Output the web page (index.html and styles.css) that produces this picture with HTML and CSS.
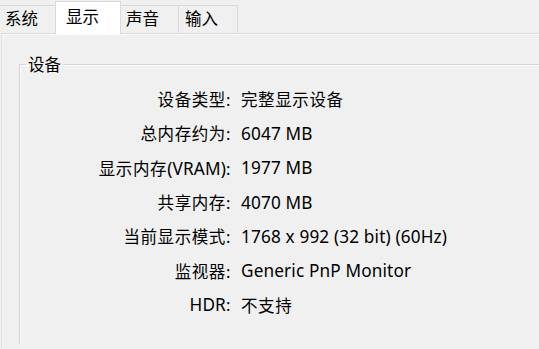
FILE: index.html
```html
<!DOCTYPE html>
<html lang="zh-CN">
<head>
<meta charset="utf-8">
<title>显示</title>
<link rel="stylesheet" href="styles.css">
</head>
<body>
<div class="tabs">
  <div class="tab first">系统</div>
  <div class="tab active">显示</div>
  <div class="tab">声音</div>
  <div class="tab">输入</div>
</div>
<div class="pane">
  <fieldset class="group">
    <legend class="legend">设备</legend>
    <div class="rows">
      <div class="label">设备类型:</div><div class="value">完整显示设备</div>
      <div class="label">总内存约为:</div><div class="value"><span class="lat">6047 MB</span></div>
      <div class="label">显示内存<span class="lat">(VRAM)</span>:</div><div class="value"><span class="lat">1977 MB</span></div>
      <div class="label">共享内存:</div><div class="value"><span class="lat">4070 MB</span></div>
      <div class="label">当前显示模式:</div><div class="value"><span class="lat">1768 x 992 (32 bit) (60Hz)</span></div>
      <div class="label">监视器:</div><div class="value"><span class="lat">Generic PnP Monitor</span></div>
      <div class="label"><span class="lat">HDR</span>:</div><div class="value">不支持</div>
    </div>
  </fieldset>
</div>
</body>
</html>
```
FILE: styles.css
```css
html, body {
  margin: 0;
  padding: 0;
  background: #f0f0f0;
  color: #000;
  font-family: "Noto Sans", "Noto Sans CJK SC", sans-serif;
  font-size: 16px;
  overflow: hidden;
  height: 349px;
}

.tabs {
  display: flex;
  align-items: flex-end;
  height: 33px;
  font-size: 16.5px;
}

.tab {
  box-sizing: border-box;
  width: 60px;
  height: 28px;
  line-height: 26px;
  padding-left: 6px;
  border: 1px solid #dadada;
  border-bottom: none;
  margin-right: -1px;
  background: #f0f0f0;
}

.tab.first {
  width: 58px;
  padding-left: 5px;
  border-left: none;
}

.tab.active {
  position: relative;
  z-index: 1;
  width: 66px;
  height: 33px;
  line-height: 30px;
  padding-left: 10px;
  margin: 0 -2px -1px -2px;
  background: #fff;
  border-color: #dadada;
}

.pane {
  box-sizing: border-box;
  margin-left: 1px;
  border-top: 1px solid #d9d9d9;
  border-left: 1px solid #e4e4e4;
  box-shadow: inset 0 1px 0 #fafafa;
  height: 316px;
  padding-top: 20px;
  overflow: hidden;
}

.group {
  margin: 0 0 0 17px;
  padding: 0;
  border: 1px solid #d5d5d5;
  border-right: none;
  border-bottom: none;
  box-shadow: inset 1px 1px 0 #fbfbfb;
  min-width: 0;
  height: 290px;
  box-sizing: border-box;
}

.legend {
  margin-left: 6px;
  padding: 0 2px;
  line-height: 20px;
  font-size: 16.5px;
  font-family: "Noto Sans CJK SC", sans-serif;
}

.rows {
  display: grid;
  grid-template-columns: 211px 1fr;
  grid-auto-rows: 34.3px;
  column-gap: 10px;
  align-items: center;
  padding-top: 8px;
  font-size: 16.5px;
  letter-spacing: 0.6px;
}

.label {
  text-align: right;
  white-space: nowrap;
}

.value {
  white-space: nowrap;
}

.lat {
  font-size: 17.2px;
  letter-spacing: 0.15px;
}
```
